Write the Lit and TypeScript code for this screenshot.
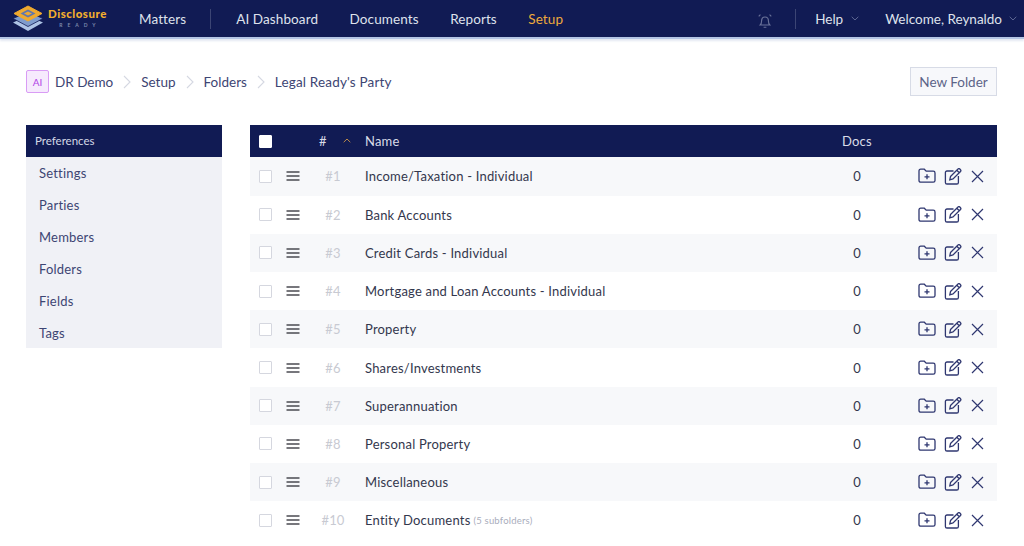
import { LitElement, html, css } from 'lit';
import { customElement } from 'lit/decorators.js';

const folders = [
  { name: 'Income/Taxation - Individual' },
  { name: 'Bank Accounts' },
  { name: 'Credit Cards - Individual' },
  { name: 'Mortgage and Loan Accounts - Individual' },
  { name: 'Property' },
  { name: 'Shares/Investments' },
  { name: 'Superannuation' },
  { name: 'Personal Property' },
  { name: 'Miscellaneous' },
  { name: 'Entity Documents', note: '(5 subfolders)' },
];

const prefs = ['Settings', 'Parties', 'Members', 'Folders', 'Fields', 'Tags'];

const chevDown = html`<svg class="caret" width="8" height="5" viewBox="0 0 8 5"><path d="M.7.8 4 4l3.3-3.2" fill="none" stroke="currentColor" stroke-width=".9"/></svg>`;
const crumbSep = html`<svg class="sep" width="8" height="14" viewBox="0 0 8 14"><path d="M1 1l6 6-6 6" fill="none" stroke="#d5d8e2" stroke-width="1.1"/></svg>`;

@customElement('app-root')
export class AppRoot extends LitElement {
  static styles = css`
    :host {
      display: block;
      height: 546px;
      overflow: hidden;
      background: #fff;
      font-family: 'Lato', 'Noto Sans', sans-serif;
      color: #141c55;
    }
    .nav {
      height: 37px;
      background: #111b54;
      border-bottom: 2px solid #b4c5e4;
      box-shadow: 0 2px 2px #e3e8f2;
      display: flex;
      align-items: center;
      padding: 0 7px 0 12px;
      color: #dfe2ec;
      font-size: 13.5px;
    }
    .brand {
      display: flex;
      align-items: center;
      gap: 4px;
      width: 127px;
    }
    .brand-text {
      display: flex;
      flex-direction: column;
      align-items: center;
      margin-top: -2px;
    }
    .brand-name {
      color: #f2ae2e;
      font-size: 11.5px;
      font-weight: 900;
      letter-spacing: 0.5px;
      line-height: 14px;
    }
    .brand-sub {
      color: #7d88ac;
      font-size: 5px;
      font-weight: 700;
      letter-spacing: 5px;
      line-height: 7px;
      margin: 1px -5px 0 0;
    }
    .vline {
      width: 1px;
      height: 20px;
      background: #3c4574;
    }
    .links {
      display: flex;
      align-items: center;
      gap: 31.5px;
      letter-spacing: 0.1px;
    }
    .links .vline {
      margin: 0 -6.500px 0 -7.500px;
    }
    .active {
      color: #eeaa3c;
    }
    .right {
      margin-left: auto;
      display: flex;
      align-items: center;
    }
    .bell {
      margin: 5px 22px 0 0;
    }
    .help {
      margin-left: 19px;
      display: flex;
      align-items: center;
      gap: 8px;
    }
    .user {
      margin-left: 26px;
      display: flex;
      align-items: center;
      gap: 7px;
    }
    .caret {
      color: #68719b;
    }
    .crumbs {
      display: flex;
      align-items: center;
      padding: 29px 27px 0 26px;
      height: 27px;
      font-size: 13.5px;
      color: #3d4573;
    }
    .ai {
      width: 23px;
      height: 23px;
      box-sizing: border-box;
      border: 1px solid #d99cf5;
      background: #f6eafd;
      border-radius: 2px;
      color: #b13fe6;
      font-size: 10px;
      display: flex;
      align-items: center;
      justify-content: center;
      margin-right: 6px;
    }
    .sep {
      margin: 0 10px;
    }
    .party {
      letter-spacing: 0.17px;
    }
    .new {
      margin-left: auto;
      width: 87px;
      height: 29px;
      box-sizing: border-box;
      border: 1px solid #d7dbe6;
      background: #f7f8fb;
      color: #5c6488;
      font: inherit;
      padding: 0;
    }
    .main {
      display: flex;
      align-items: flex-start;
      gap: 28px;
      padding: 30px 27px 0 26px;
    }
    .side {
      width: 196px;
      height: 223px;
      overflow: hidden;
      flex: none;
      background: #f0f1f6;
    }
    .side-head {
      height: 32px;
      background: #111b54;
      color: #d4d8e6;
      font-size: 11.5px;
      line-height: 32px;
      padding-left: 9px;
    }
    .side-item {
      height: 32px;
      line-height: 32px;
      padding-left: 13px;
      font-size: 13px;
      color: #3d4573;
      letter-spacing: 0.2px;
    }
    .table {
      flex: 1;
    }
    .row {
      display: grid;
      grid-template-columns: 36px 32px 34px 490px 30px 1fr;
      align-items: center;
      height: 38.23px;
      font-size: 13px;
      color: #33374d;
      letter-spacing: 0.2px;
    }
    .row:nth-child(even) {
      background: #f7f8fa;
    }
    .row.head {
      height: 32.3px;
      background: #111b54;
      color: #d9dce8;
    }
    .box {
      width: 13px;
      height: 13px;
      box-sizing: border-box;
      border: 1px solid #d5d7df;
      background: #fff;
      border-radius: 1px;
      margin-left: 9px;
    }
    .head .box {
      border-color: #fff;
    }
    .grip {
      display: block;
    }
    .num {
      color: #c8cad2;
      text-align: center;
      padding-right: 4px;
    }
    .head .num {
      color: #d9dce8;
      position: relative;
      text-align: left;
      padding: 0 0 0 1px;
    }
    .sort {
      position: absolute;
      left: 25px;
      top: 5px;
    }
    .name {
      padding-left: 13px;
    }
    .note {
      font-size: 9.5px;
      color: #a9adbc;
      margin-left: 3px;
      position: relative;
      top: -1px;
    }
    .docs {
      text-align: center;
    }
    .head .docs {
      text-align: left;
      white-space: nowrap;
    }
    .acts {
      display: flex;
      align-items: center;
      gap: 8px;
      padding-left: 46px;
      color: #2f3770;
    }
    .close {
      margin-left: 1px;
    }
  `;

  renderRow(f: { name: string; note?: string }, i: number) {
    return html`
      <div class="row">
        <div class="box"></div>
        <svg class="grip" width="14" height="10" viewBox="0 0 14 10">
          <path d="M.5 1h13M.5 5h13M.5 9h13" stroke="#4b4b52" stroke-width="1.4"/>
        </svg>
        <div class="num">#${i + 1}</div>
        <div class="name">${f.name}${f.note ? html`<span class="note">${f.note}</span>` : ''}</div>
        <div class="docs">0</div>
        <div class="acts">
          <svg width="18" height="16" viewBox="0 0 18 16" fill="none" stroke="currentColor" stroke-width="1.3">
            <path d="M1 3c0-1 .6-1.800 1.700-1.800h3.600l1.900 2h7.100c1 0 1.700.7 1.700 1.700v7.600c0 1-.7 1.700-1.700 1.700H2.700C1.700 14.200 1 13.500 1 12.500z"/>
            <path d="M9 6.300v5M6.500 8.800h5"/>
          </svg>
          <svg width="18" height="17" viewBox="0 0 18 17" fill="none" stroke="currentColor" stroke-width="1.3">
            <path d="M9.500 3H3c-1 0-1.600.6-1.600 1.600v9.800c0 1 .6 1.600 1.600 1.600h9.800c1 0 1.600-.6 1.600-1.600V8"/>
            <path d="M6.500 8.500 14 1c.6-.5 1.300-.5 1.800 0l.7.7c.5.5.5 1.200 0 1.800L9 11l-3.200.8zM12.800 2.200l2.500 2.500"/>
          </svg>
          <svg class="close" width="13" height="13" viewBox="0 0 13 13" fill="none" stroke="currentColor" stroke-width="1.2">
            <path d="M1 1l11 11M12 1 1 12"/>
          </svg>
        </div>
      </div>
    `;
  }

  render() {
    return html`
      <div class="nav">
        <div class="brand">
          <svg width="32" height="27" viewBox="0 0 32 27">
            <path d="M16 11 31 17.500 16 26 1 17.500z" fill="#aec4e6"/>
            <path d="M16 7 31 13.500 16 21.500 1 13.500z" fill="#7f9ccc" stroke="#111b54" stroke-width=".8"/>
            <path d="M16 1 30 8.500 16 16 2 8.500z" fill="#efa92f" stroke="#efa92f" stroke-linejoin="round"/>
            <path d="M16 4.500 23.500 8.500 16 12.500 8.500 8.500z" fill="#5f76ad"/>
            <path d="M16 6.500 20 8.500 16 10.500 12 8.500z" fill="#efa92f"/>
          </svg>
          <div class="brand-text">
            <span class="brand-name">Disclosure</span>
            <span class="brand-sub">READY</span>
          </div>
        </div>
        <div class="links">
          <span>Matters</span>
          <span class="vline"></span>
          <span>AI Dashboard</span>
          <span>Documents</span>
          <span>Reports</span>
          <span class="active">Setup</span>
        </div>
        <div class="right">
          <svg class="bell" width="16" height="16" viewBox="0 0 14 14" fill="none" stroke="#6a7299" stroke-width="1">
            <path d="M2.800 10.500c1-1 1.200-1.800 1.200-3.500 0-2 1.300-3.500 3-3.500s3 1.500 3 3.500c0 1.700.2 2.500 1.200 3.500zM5.800 12.500h2.400M1.500 3 3 1.500M12.500 3 11 1.500"/>
          </svg>
          <span class="vline"></span>
          <span class="help">Help ${chevDown}</span>
          <span class="user">Welcome, Reynaldo ${chevDown}</span>
        </div>
      </div>
      <div class="crumbs">
        <span class="ai">AI</span>
        <span>DR Demo</span>${crumbSep}
        <span>Setup</span>${crumbSep}
        <span>Folders</span>${crumbSep}
        <span class="party">Legal Ready's Party</span>
        <button class="new">New Folder</button>
      </div>
      <div class="main">
        <div class="side">
          <div class="side-head">Preferences</div>
          <div>
            ${prefs.map((p) => html`<div class="side-item">${p}</div>`)}
          </div>
        </div>
        <div class="table">
          <div class="row head">
            <div class="box"></div>
            <div></div>
            <div class="num">#
              <svg class="sort" width="8" height="5" viewBox="0 0 8 5"><path d="M.7 4.200 4 1l3.300 3.200" fill="none" stroke="#b98a4a" stroke-width="1"/></svg>
            </div>
            <div class="name">Name</div>
            <div class="docs">Docs</div>
            <div></div>
          </div>
          ${folders.map((f, i) => this.renderRow(f, i))}
        </div>
      </div>
    `;
  }
}
